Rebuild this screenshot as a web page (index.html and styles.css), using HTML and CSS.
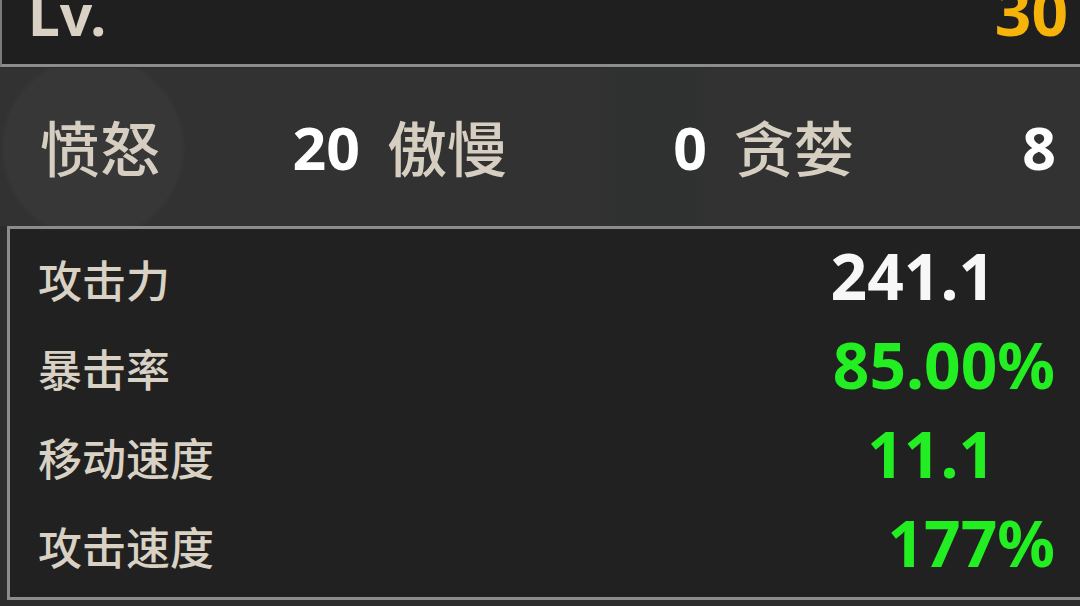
FILE: index.html
```html
<!DOCTYPE html>
<html lang="zh">
<head>
<meta charset="utf-8">
<title>Stats</title>
<link rel="stylesheet" href="styles.css">
</head>
<body>
<div class="screen">
  <header class="level-bar">
    <span class="level-label">Lv.</span>
    <span class="level-value">30</span>
  </header>
  <section class="sins">
    <div class="sin"><span class="sin-name">愤怒</span><span class="sin-num">20</span></div>
    <div class="sin"><span class="sin-name">傲慢</span><span class="sin-num">0</span></div>
    <div class="sin"><span class="sin-name">贪婪</span><span class="sin-num">8</span></div>
  </section>
  <section class="stats">
    <div class="stat"><span class="stat-name">攻击力</span><span class="stat-val white plain">241.1</span></div>
    <div class="stat"><span class="stat-name">暴击率</span><span class="stat-val green">85.00%</span></div>
    <div class="stat"><span class="stat-name">移动速度</span><span class="stat-val green plain">11.1</span></div>
    <div class="stat"><span class="stat-name">攻击速度</span><span class="stat-val green">177%</span></div>
  </section>
</div>
</body>
</html>
```
FILE: styles.css
```css
html, body {
  margin: 0;
  padding: 0;
}
body {
  width: 1080px;
  height: 606px;
  overflow: hidden;
  background: #2c2c2c;
  font-family: "Noto Sans", "Noto Sans CJK SC", sans-serif;
}
.screen {
  width: 1080px;
  height: 606px;
  overflow: hidden;
  display: flex;
  flex-direction: column;
}
.level-bar {
  height: 67px;
  flex: none;
  box-sizing: border-box;
  background: #1f1f1f;
  border-left: 2px solid #7a7a7a;
  border-bottom: 3px solid #8c8c8c;
  display: flex;
  justify-content: space-between;
  align-items: baseline;
  padding: 0 12px 0 26px;
  overflow: hidden;
  font-weight: 700;
  font-size: 64px;
  line-height: 64px;
  margin-top: -20px;
  height: 87px;
}
.level-label {
  color: #d9d2c4;
  font-size: 57px;
}
.level-value {
  color: #f6b40a;
}
.sins {
  height: 158px;
  flex: none;
  margin-top: 1px;
  background:
    radial-gradient(circle at 93px 80px, #383838 0, #373737 88px, rgba(50,50,50,0) 93px),
    linear-gradient(90deg, rgba(0,0,0,0) 595px, rgba(30,40,40,0.12) 615px, rgba(30,40,40,0.12) 695px, rgba(0,0,0,0) 710px),
    #323232;
  display: grid;
  grid-template-columns: 320px 320px 322px;
  column-gap: 27px;
  padding-left: 40px;
  align-items: center;
}
.sin {
  display: flex;
  justify-content: space-between;
  align-items: center;
}
.sin-name {
  font-family: "Noto Sans CJK SC", sans-serif;
  font-size: 60px;
  font-weight: 500;
  color: #d6cfc1;
  line-height: 1;
  margin-top: -2px;
}
.sin-num {
  font-size: 59px;
  font-weight: 700;
  color: #ffffff;
  line-height: 1;
}
.stats {
  flex: none;
  height: 374px;
  box-sizing: border-box;
  margin: 0 -20px 0 7px;
  background: #212121;
  border-top: 3px solid #8c8c8c;
  border-left: 3px solid #8c8c8c;
  border-bottom: 3px solid #8c8c8c;
  padding: 5px 45px 0 28px;
  display: grid;
  grid-template-rows: repeat(4, 89px);
}
.stat {
  display: flex;
  justify-content: space-between;
  align-items: center;
}
.stat-name {
  font-family: "Noto Sans CJK SC", sans-serif;
  font-size: 44px;
  font-weight: 500;
  color: #d8d1c4;
  line-height: 1;
}
.stat-val {
  font-size: 64px;
  font-weight: 700;
  line-height: 1;
  margin-bottom: 6px;
}
.stat-val.plain {
  margin-right: 60px;
}
.white {
  color: #f7f7f7;
}
.green {
  color: #22ee22;
}
```
